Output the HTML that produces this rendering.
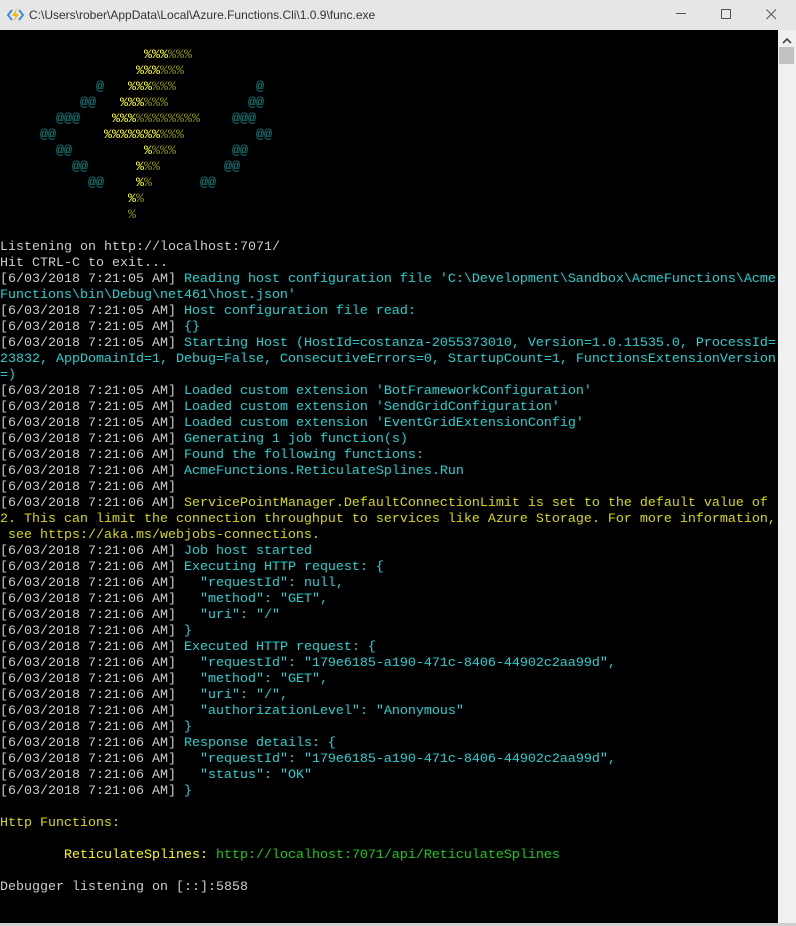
<!DOCTYPE html>
<html><head><meta charset="utf-8"><style>
html,body{margin:0;padding:0;width:796px;height:926px;overflow:hidden;background:#000;}
.tb{position:absolute;left:0;top:0;width:796px;height:30px;background:#e6e6e6;font-family:"Liberation Sans",sans-serif;font-size:12px;color:#333;}
.tb .t{position:absolute;left:29px;top:8px;}
.sb{position:absolute;left:778px;top:30px;width:18px;height:896px;background:#f0f0f0;}
.thumb{position:absolute;left:779px;top:47px;width:15px;height:17px;background:#c1c1c1;}
pre{position:absolute;left:0;top:32px;margin:0;font-family:"Liberation Mono",monospace;font-size:13.33px;line-height:16px;color:#cccccc;white-space:pre;}
.c{color:#22d4d4}.y{color:#dada00}.Y{color:#ffff00}.g{color:#16d016}.d{color:#8a8a00}.a{color:#0a8a8a}
.bot{position:absolute;left:0;top:923px;width:796px;height:3px;background:#cfcfcf;}
</style></head><body>
<div class="tb">
<svg style="position:absolute;left:7px;top:7px" width="17" height="16" viewBox="0 0 17 16"><path d="M5 3 L1 8 L5 13" fill="none" stroke="#3a8fd8" stroke-width="2"/><path d="M12 3 L16 8 L12 13" fill="none" stroke="#3a8fd8" stroke-width="2"/><path d="M10 1 L5 9 L8.5 9 L6.5 15 L12 7 L8.5 7 L10 1Z" fill="#f5b800"/></svg>
<span class="t">C:\Users\rober\AppData\Local\Azure.Functions.Cli\1.0.9\func.exe</span>
<svg style="position:absolute;left:676px;top:13px" width="11" height="2"><rect width="10" height="1" fill="#555"/></svg>
<svg style="position:absolute;left:721px;top:9px" width="11" height="11"><rect x="0.5" y="0.5" width="9" height="9" fill="none" stroke="#555"/></svg>
<svg style="position:absolute;left:766px;top:9px" width="11" height="11"><path d="M0.5 0.5L10 10M10 0.5L0.5 10" stroke="#555"/></svg>
</div>
<div class="sb"><svg style="position:absolute;left:4px;top:7px" width="10" height="7"><path d="M1 6L5 2L9 6" fill="none" stroke="#444" stroke-width="1.6"/></svg></div>
<div class="thumb"></div>
<pre>

                  <span class="Y">%%%</span><span class="d">%%%</span>
                 <span class="Y">%%%</span><span class="d">%%%</span>
            <span class="a">@</span>   <span class="Y">%%%</span><span class="d">%%%</span>          <span class="a">@</span>
          <span class="a">@@</span>   <span class="Y">%%%</span><span class="d">%%%</span>          <span class="a">@@</span>
       <span class="a">@@@</span>    <span class="Y">%%%</span><span class="d">%%%%%%%%</span>    <span class="a">@@@</span>
     <span class="a">@@</span>      <span class="Y">%%%%%%%</span><span class="d">%%%</span>         <span class="a">@@</span>
       <span class="a">@@</span>         <span class="Y">%</span><span class="d">%%%</span>       <span class="a">@@</span>
         <span class="a">@@</span>      <span class="Y">%</span><span class="d">%%</span>        <span class="a">@@</span>
           <span class="a">@@</span>    <span class="Y">%</span><span class="d">%</span>      <span class="a">@@</span>
                <span class="Y">%</span><span class="d">%</span>
                <span class="d">%</span>

Listening on http://localhost:7071/
Hit CTRL-C to exit...
[6/03/2018 7:21:05 AM] <span class="c">Reading host configuration file 'C:\Development\Sandbox\AcmeFunctions\Acme</span>
<span class="c">Functions\bin\Debug\net461\host.json'</span>
[6/03/2018 7:21:05 AM] <span class="c">Host configuration file read:</span>
[6/03/2018 7:21:05 AM] <span class="c">{}</span>
[6/03/2018 7:21:05 AM] <span class="c">Starting Host (HostId=costanza-2055373010, Version=1.0.11535.0, ProcessId=</span>
<span class="c">23832, AppDomainId=1, Debug=False, ConsecutiveErrors=0, StartupCount=1, FunctionsExtensionVersion</span>
<span class="c">=)</span>
[6/03/2018 7:21:05 AM] <span class="c">Loaded custom extension 'BotFrameworkConfiguration'</span>
[6/03/2018 7:21:05 AM] <span class="c">Loaded custom extension 'SendGridConfiguration'</span>
[6/03/2018 7:21:05 AM] <span class="c">Loaded custom extension 'EventGridExtensionConfig'</span>
[6/03/2018 7:21:06 AM] <span class="c">Generating 1 job function(s)</span>
[6/03/2018 7:21:06 AM] <span class="c">Found the following functions:</span>
[6/03/2018 7:21:06 AM] <span class="c">AcmeFunctions.ReticulateSplines.Run</span>
[6/03/2018 7:21:06 AM]
[6/03/2018 7:21:06 AM] <span class="y">ServicePointManager.DefaultConnectionLimit is set to the default value of</span>
<span class="y">2. This can limit the connection throughput to services like Azure Storage. For more information,</span>
<span class="y"> see https://aka.ms/webjobs-connections.</span>
[6/03/2018 7:21:06 AM] <span class="c">Job host started</span>
[6/03/2018 7:21:06 AM] <span class="c">Executing HTTP request: {</span>
[6/03/2018 7:21:06 AM] <span class="c">  "requestId": null,</span>
[6/03/2018 7:21:06 AM] <span class="c">  "method": "GET",</span>
[6/03/2018 7:21:06 AM] <span class="c">  "uri": "/"</span>
[6/03/2018 7:21:06 AM] <span class="c">}</span>
[6/03/2018 7:21:06 AM] <span class="c">Executed HTTP request: {</span>
[6/03/2018 7:21:06 AM] <span class="c">  "requestId": "179e6185-a190-471c-8406-44902c2aa99d",</span>
[6/03/2018 7:21:06 AM] <span class="c">  "method": "GET",</span>
[6/03/2018 7:21:06 AM] <span class="c">  "uri": "/",</span>
[6/03/2018 7:21:06 AM] <span class="c">  "authorizationLevel": "Anonymous"</span>
[6/03/2018 7:21:06 AM] <span class="c">}</span>
[6/03/2018 7:21:06 AM] <span class="c">Response details: {</span>
[6/03/2018 7:21:06 AM] <span class="c">  "requestId": "179e6185-a190-471c-8406-44902c2aa99d",</span>
[6/03/2018 7:21:06 AM] <span class="c">  "status": "OK"</span>
[6/03/2018 7:21:06 AM] <span class="c">}</span>

<span class="y">Http Functions:</span>

        <span class="Y">ReticulateSplines:</span> <span class="g">http://localhost:7071/api/ReticulateSplines</span>

Debugger listening on [::]:5858
</pre>
<div class="bot"></div>
</body></html>
